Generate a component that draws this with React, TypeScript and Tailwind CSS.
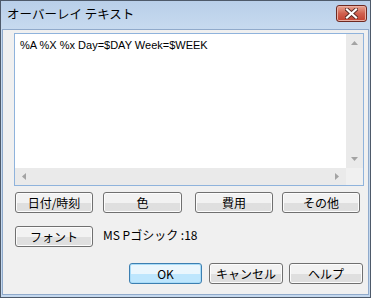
import React from "react";

const JP = "font-['MS_UI_Gothic','Noto_Sans_CJK_JP',sans-serif]";

function Btn({ label, className = "", primary = false }: { label: string; className?: string; primary?: boolean }) {
  return (
    <div
      className={`flex h-[21px] items-center justify-center rounded-[3px] border text-[12px] leading-none text-black ${
        primary
          ? "border-[#3c7fb1] bg-gradient-to-b from-[#eaf6fd] from-50% to-[#bee6fd] to-50% shadow-[inset_0_0_0_1px_#a9dcf8]"
          : "border-[#707070] bg-gradient-to-b from-[#f2f2f2] from-50% to-[#dfdfdf] to-50% shadow-[inset_0_0_0_1px_#fcfcfc]"
      } ${className}`}
    >
      <span className={`${JP} pt-[1px]`}>{label}</span>
    </div>
  );
}

function Arrow({ dir }: { dir: "up" | "down" | "left" | "right" }) {
  const pts = {
    up: "0,4 7,4 3.5,0",
    down: "0,0 7,0 3.5,4",
    left: "4,0 4,7 0,3.5",
    right: "0,0 0,7 4,3.5",
  }[dir];
  const vertical = dir === "up" || dir === "down";
  return (
    <svg width={vertical ? 7 : 4} height={vertical ? 4 : 7} viewBox={vertical ? "0 0 7 4" : "0 0 4 7"}>
      <polygon points={pts} fill="#a3a3a3" />
    </svg>
  );
}

export default function App() {
  return (
    <div className="flex h-[298px] w-[371px] flex-col border border-[#4e5a6a] bg-[#c4d8ee]">
      {/* title bar */}
      <div className="flex h-[28px] items-start bg-gradient-to-b from-[#b9cfe9] to-[#c7daef]">
        <span className={`${JP} ml-[6px] mt-[5px] text-[12.5px] leading-[16px] text-black`}>オーバーレイ テキスト</span>
        <div className="ml-auto mr-[3px] mt-[4px] flex h-[17px] w-[31px] items-center justify-center rounded-[3px] border border-[#6e2a22] bg-gradient-to-b from-[#e8a491] via-[#d0604f] to-[#c2402f] shadow-[inset_0_0_0_1px_#eab0a4]">
          <svg width="13" height="11" viewBox="0 0 13 11">
            <path d="M2 1.5 L11 9.5 M11 1.5 L2 9.5" stroke="#5a2a24" strokeWidth="4" strokeLinecap="square" />
            <path d="M2 1.5 L11 9.5 M11 1.5 L2 9.5" stroke="#ffffff" strokeWidth="2.2" strokeLinecap="square" />
          </svg>
        </div>
      </div>

      {/* client area */}
      <div className="mx-[1px] mb-[2px] flex flex-1 flex-col border border-[#90aacb] bg-[#f0f0f0] pl-[11px] pt-[3px]">
        <div className="flex h-[153px] w-[350px] flex-col border border-[#8fb3dc] bg-white">
          <div className="flex flex-1">
            <div className="flex-1 pl-[5px] pt-[4px] font-['Liberation_Sans',Arial,sans-serif] text-[11px] leading-[14px] text-black">
              %A %X %x Day=$DAY Week=$WEEK
            </div>
            <div className="flex w-[17px] flex-col items-center justify-between bg-[#eaeaea] py-[7px]">
              <Arrow dir="up" />
              <Arrow dir="down" />
            </div>
          </div>
          <div className="flex h-[17px]">
            <div className="flex flex-1 items-center justify-between bg-[#eaeaea] px-[7px]">
              <Arrow dir="left" />
              <Arrow dir="right" />
            </div>
            <div className="w-[17px] bg-[#f0f0f0]" />
          </div>
        </div>

        <div className="mt-[6px] flex">
          <Btn label="日付/時刻" className="ml-[1px] w-[78px]" />
          <Btn label="色" className="ml-[10px] w-[79px]" />
          <Btn label="費用" className="ml-[13px] w-[78px]" />
          <Btn label="その他" className="ml-[9px] w-[78px]" />
        </div>

        <div className="mt-[13px] flex items-center">
          <Btn label="フォント" className="ml-[1px] w-[78px]" />
          <span className={`${JP} ml-[10px] mb-[3px] text-[12px] text-black`}>MS Pゴシック :18</span>
        </div>

        <div className="mt-[16px] flex">
          <Btn label="OK" primary className="ml-[115px] w-[73px]" />
          <Btn label="キャンセル" className="ml-[7px] w-[74px]" />
          <Btn label="ヘルプ" className="ml-[6px] w-[74px]" />
        </div>
      </div>
    </div>
  );
}
